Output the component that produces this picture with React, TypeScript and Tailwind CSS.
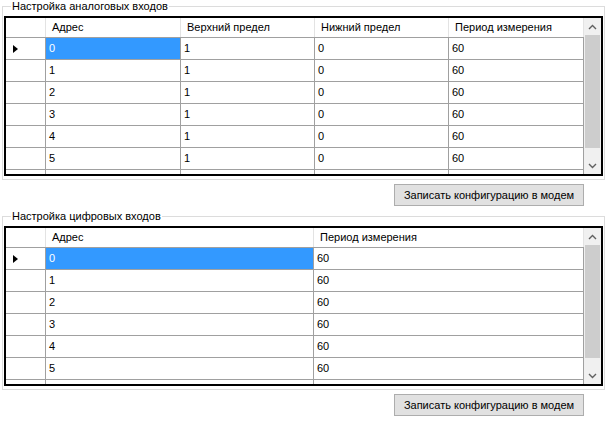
import React from "react";

type Column = { title: string; width: string };

const analogColumns: Column[] = [
  { title: "Адрес", width: "w-[135px]" },
  { title: "Верхний предел", width: "w-[134px]" },
  { title: "Нижний предел", width: "w-[134px]" },
  { title: "Период измерения", width: "w-[135px]" },
];

const digitalColumns: Column[] = [
  { title: "Адрес", width: "w-[268px]" },
  { title: "Период измерения", width: "w-[270px]" },
];

// last row is only partly visible, its text sits below the fold
const analogRows = [0, 1, 2, 3, 4, 5].map((i) => [String(i), "1", "0", "60"]).concat([["", "", "", ""]]);
const digitalRows = [0, 1, 2, 3, 4, 5].map((i) => [String(i), "60"]).concat([["", ""]]);

const Chevron = ({ up }: { up: boolean }) => (
  <svg width="9" height="6" viewBox="0 0 9 6">
    <polyline
      points={up ? "1,5 4.5,1.5 8,5" : "1,1 4.5,4.5 8,1"}
      fill="none"
      stroke="#606060"
      strokeWidth="1.4"
    />
  </svg>
);

const Scrollbar = () => (
  <div className="w-[17px] shrink-0 flex flex-col bg-[#f0f0f0]">
    <div className="h-[17px] flex items-center justify-center">
      <Chevron up />
    </div>
    <div className="flex-1 flex flex-col px-[1px]">
      <div className="h-[113px] bg-[#cdcdcd]" />
    </div>
    <div className="h-[17px] flex items-center justify-center">
      <Chevron up={false} />
    </div>
  </div>
);

const RowArrow = () => (
  <svg width="5" height="8" viewBox="0 0 5 8">
    <polygon points="0,0 5,4 0,8" fill="#000" />
  </svg>
);

const DataGrid = ({ columns, rows }: { columns: Column[]; rows: string[][] }) => (
  <div className="flex h-[160px] w-[599px] border-2 border-black bg-white overflow-hidden">
    <div className="flex-1 flex flex-col overflow-hidden">
      {/* header */}
      <div className="flex h-[20px] shrink-0 border-b border-[#a0a0a0]">
        <div className="w-[40px] shrink-0 border-r border-[#e3e3e3]" />
        {columns.map((c) => (
          <div
            key={c.title}
            className={`${c.width} shrink-0 flex items-center pl-[6px] border-r border-[#e3e3e3] text-black`}
          >
            {c.title}
          </div>
        ))}
      </div>
      {/* body */}
      {rows.map((row, r) => (
        <div key={r} className="flex h-[22px] shrink-0">
          <div className="w-[40px] shrink-0 flex items-center pl-[7px] border-r border-b border-[#a0a0a0]">
            {r === 0 && <RowArrow />}
          </div>
          {row.map((v, ci) => (
            <div
              key={ci}
              className={`${columns[ci].width} shrink-0 flex items-center pl-[3px] border-r border-b border-[#a0a0a0] ${
                r === 0 && ci === 0 ? "bg-[#3399ff] text-white" : "text-black"
              }`}
            >
              {v}
            </div>
          ))}
        </div>
      ))}
    </div>
    <Scrollbar />
  </div>
);

const Section = ({ title, columns, rows }: { title: string; columns: Column[]; rows: string[][] }) => (
  <div className="flex flex-col h-[210px]">
    <fieldset className="ml-[2px] w-[603px] border border-[#dcdcdc] pt-[4px] pb-[3px] pl-[1px]">
      <legend className="ml-[7px] px-[1px] text-[11px] leading-[12px] text-black">{title}</legend>
      <DataGrid columns={columns} rows={rows} />
    </fieldset>
    <button className="self-end mr-[23px] mt-[4px] w-[190px] h-[22px] border border-[#adadad] bg-[#e1e1e1] text-[11px] text-black">
      Записать конфигурацию в модем
    </button>
  </div>
);

export default function App() {
  return (
    <div className="w-[607px] h-[423px] bg-white overflow-hidden font-['Liberation_Sans',Arial,sans-serif] text-[11px]">
      <Section title="Настройка аналоговых входов" columns={analogColumns} rows={analogRows} />
      <Section title="Настройка цифровых входов" columns={digitalColumns} rows={digitalRows} />
    </div>
  );
}
